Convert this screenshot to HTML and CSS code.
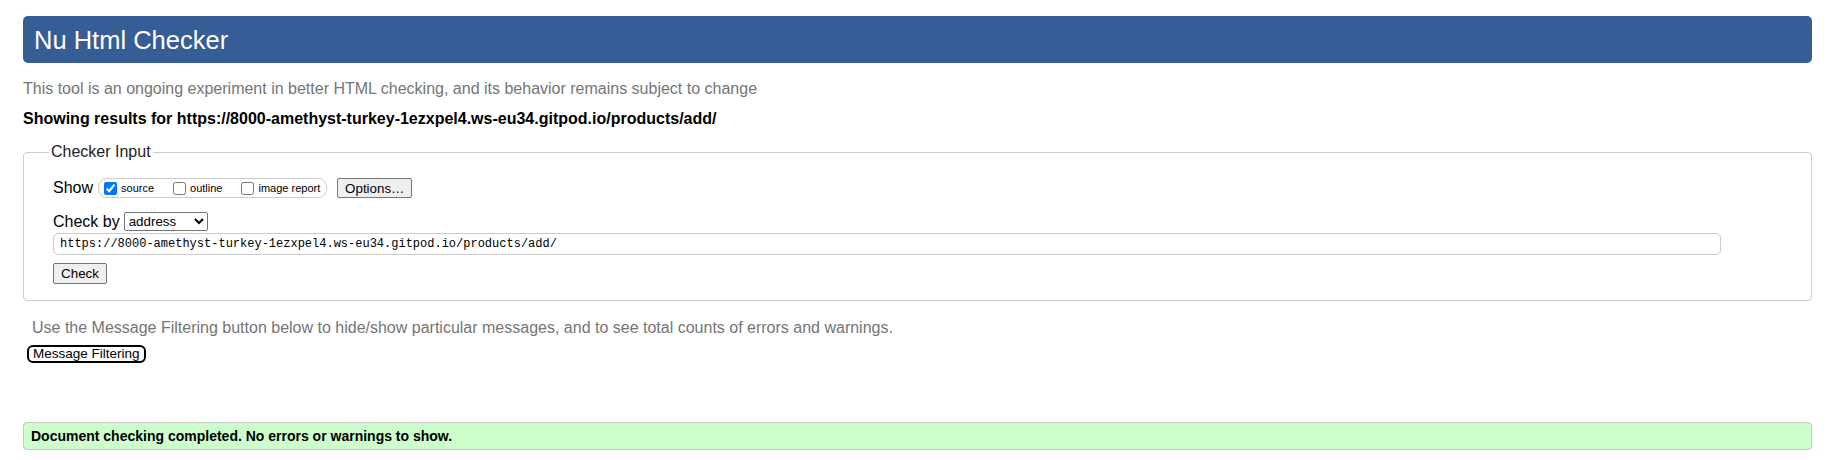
FILE: index.html
```html
<!DOCTYPE html>
<html lang="en">
<head>
<meta charset="utf-8">
<title>Showing results for https://8000-amethyst-turkey-1ezxpel4.ws-eu34.gitpod.io/products/add/ - Nu Html Checker</title>
<link rel="stylesheet" href="styles.css">
</head>
<body>
<h1 class="title">Nu Html Checker</h1>
<p class="intro">This tool is an ongoing experiment in better HTML checking, and its behavior remains subject to change</p>
<p class="results">Showing results for https://8000-amethyst-turkey-1ezxpel4.ws-eu34.gitpod.io/products/add/</p>
<form class="form">
  <fieldset class="checker">
    <legend class="legend">Checker Input</legend>
    <div class="row show-row">
      <span class="lbl">Show</span>
      <span class="opts">
        <label class="opt"><input type="checkbox" class="cb" checked>source</label>
        <label class="opt"><input type="checkbox" class="cb">outline</label>
        <label class="opt"><input type="checkbox" class="cb">image report</label>
      </span>
      <button type="button" class="btn options">Options…</button>
    </div>
    <div class="row by-row">
      <span class="lbl">Check by</span>
      <select class="sel"><option>address</option><option>file upload</option><option>text input</option></select>
    </div>
    <input type="url" class="url" value="https://8000-amethyst-turkey-1ezxpel4.ws-eu34.gitpod.io/products/add/">
    <div class="submit-row"><button type="button" class="btn check">Check</button></div>
  </fieldset>
</form>
<p class="note">Use the Message Filtering button below to hide/show particular messages, and to see total counts of errors and warnings.</p>
<button type="button" class="filter">Message Filtering</button>
<p class="done">Document checking completed. No errors or warnings to show.</p>
</body>
</html>
```

FILE: styles.css
```css
html, body {
  margin: 0;
  padding: 0;
  background: #fff;
}
body {
  padding: 16px 21px 0 23px;
  font-family: "Liberation Sans", Arial, sans-serif;
  font-size: 16px;
  color: #000;
}
.title {
  margin: 0;
  height: 47px;
  box-sizing: border-box;
  padding: 0 11px;
  background: #365d95;
  color: #fff;
  border-radius: 5px;
  font-weight: normal;
  font-size: 25.5px;
  line-height: 48px;
}
.intro {
  margin: 16px 0 0 0;
  line-height: 20px;
  font-size: 16px;
  color: #757575;
}
.results {
  margin: 10px 0 0 0;
  line-height: 20px;
  font-size: 16px;
  font-weight: bold;
}
.form {
  margin: 13px 0 0 0;
}
.checker {
  margin: 0;
  padding: 0 29px 16px 29px;
  border: 1px solid #ccc;
  border-radius: 4px;
}
.legend {
  padding: 0 2px;
  margin-left: -4px;
  font-size: 16px;
  line-height: 20px;
  color: #222;
}
.row {
  display: flex;
  align-items: center;
}
.show-row {
  margin-top: 16px;
  height: 20px;
}
.lbl {
  font-size: 16px;
  line-height: 20px;
}
.opts {
  display: flex;
  align-items: center;
  height: 18px;
  margin-left: 5px;
  padding: 0 6px 0 5px;
  border: 1px solid #ccc;
  border-radius: 9px;
  font-size: 11px;
}
.opt {
  display: flex;
  align-items: center;
  margin-right: 19px;
}
.opt:last-child {
  margin-right: 0;
}
.cb {
  width: 13px;
  height: 13px;
  margin: 0 4px 0 0;
}
.btn {
  font-family: "Liberation Sans", Arial, sans-serif;
  font-size: 13.33px;
  box-sizing: border-box;
  background: #efefef;
  border: 1px solid #767676;
  border-radius: 2px;
  padding: 0 6px;
  color: #000;
}
.options {
  margin-left: 10px;
  width: 75px;
  height: 20px;
}
.by-row {
  margin-top: 13px;
  height: 21px;
}
.sel {
  margin-left: 4px;
  width: 84px;
  height: 19px;
  font-family: "Liberation Sans", Arial, sans-serif;
  font-size: 13.33px;
  border: 1px solid #767676;
  border-radius: 2px;
  background: #fff;
}
.url {
  display: block;
  box-sizing: border-box;
  margin: 1px 0 0 0;
  width: calc(100% - 61px);
  height: 22px;
  padding: 0 6px;
  border: 1px solid #ccc;
  border-radius: 5px;
  font-family: "Liberation Mono", "DejaVu Sans Mono", monospace;
  font-size: 12px;
  color: #000;
}
.submit-row {
  margin-top: 8px;
  height: 21px;
}
.check {
  width: 54px;
  height: 21px;
}
.note {
  margin: 17px 0 0 9px;
  line-height: 20px;
  font-size: 16px;
  color: #757575;
}
.filter {
  display: block;
  margin: 7px 0 0 4px;
  height: 18px;
  box-sizing: border-box;
  padding: 0 4px;
  background: #fff;
  border: 2px solid #000;
  border-radius: 6px;
  font-family: "Liberation Sans", Arial, sans-serif;
  font-size: 13.5px;
  line-height: 14px;
  color: #000;
}
.done {
  margin: 59px 0 0 0;
  height: 28px;
  box-sizing: border-box;
  padding: 0 7px;
  background: #ccffcc;
  border: 1px solid #c6c6c6;
  border-radius: 4px;
  font-size: 14px;
  font-weight: bold;
  line-height: 26px;
}
```
